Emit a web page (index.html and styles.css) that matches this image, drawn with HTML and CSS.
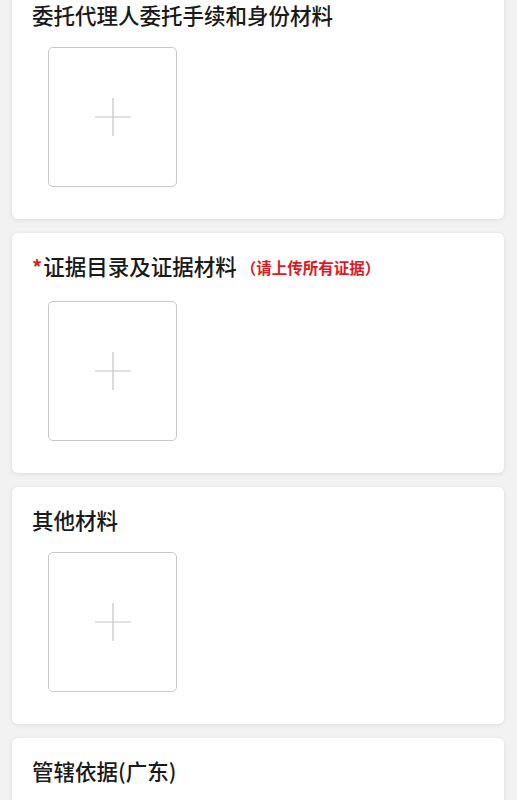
FILE: index.html
```html
<!DOCTYPE html>
<html lang="zh-CN">
<head>
<meta charset="utf-8">
<title>材料上传</title>
<link rel="stylesheet" href="styles.css">
</head>
<body>
<main class="page">
  <section class="card card--first">
    <h2 class="card-title">委托代理人委托手续和身份材料</h2>
    <div class="upload">
      <svg class="plus" width="36" height="38" viewBox="0 0 36 38"><line x1="0" y1="19" x2="36" y2="19"/><line x1="18" y1="0" x2="18" y2="38"/></svg>
    </div>
  </section>
  <section class="card">
    <h2 class="card-title card-title--required"><span class="star">*</span>证据目录及证据材料<span class="note">（请上传所有证据）</span></h2>
    <div class="upload">
      <svg class="plus" width="36" height="38" viewBox="0 0 36 38"><line x1="0" y1="19" x2="36" y2="19"/><line x1="18" y1="0" x2="18" y2="38"/></svg>
    </div>
  </section>
  <section class="card">
    <h2 class="card-title">其他材料</h2>
    <div class="upload">
      <svg class="plus" width="36" height="38" viewBox="0 0 36 38"><line x1="0" y1="19" x2="36" y2="19"/><line x1="18" y1="0" x2="18" y2="38"/></svg>
    </div>
  </section>
  <section class="card">
    <h2 class="card-title">管辖依据(广东)</h2>
    <div class="upload">
      <svg class="plus" width="36" height="38" viewBox="0 0 36 38"><line x1="0" y1="19" x2="36" y2="19"/><line x1="18" y1="0" x2="18" y2="38"/></svg>
    </div>
  </section>
</main>
</body>
</html>
```
FILE: styles.css
```css
html, body {
  margin: 0;
  padding: 0;
  background: #f2f2f2;
}
body {
  font-family: "Noto Sans CJK SC", "Noto Sans", sans-serif;
  color: #1a1a1a;
  overflow: hidden;
}
.page {
  display: flex;
  flex-direction: column;
  gap: 14px;
  padding: 0 13px 20px 12px;
}
.card {
  background: #ffffff;
  border-radius: 6px;
  box-shadow: 0 1px 5px rgba(0, 0, 0, 0.09);
  padding: 18px 20px 32px 20px;
}
.card--first {
  margin-top: -18px;
}
.card-title {
  margin: 0 0 17px 0;
  font-size: 21.5px;
  font-weight: 500;
  line-height: 30px;
  height: 30px;
  white-space: nowrap;
  color: #1a1a1a;
}
.card-title--required {
  margin-bottom: 20px;
}
.star {
  color: #e0191f;
  font-weight: bold;
  font-size: 20px;
  margin-right: 1px;
}
.note {
  color: #e0191f;
  font-size: 15.5px;
  font-weight: bold;
  margin-left: 4px;
  vertical-align: 1px;
}
.upload {
  margin-left: 16px;
  width: 127px;
  height: 138px;
  border: 1px solid #c8c8c8;
  border-radius: 5px;
  display: flex;
  align-items: center;
  justify-content: center;
}
.plus line {
  stroke: #c4c4c4;
  stroke-width: 1.2;
}
```
